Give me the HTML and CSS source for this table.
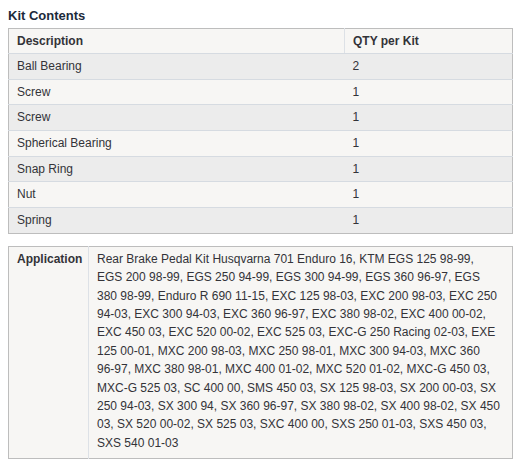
FILE: index.html
```html
<!DOCTYPE html>
<html>
<head>
<meta charset="utf-8">
<link rel="stylesheet" href="styles.css">
</head>
<body>
<h2 class="title">Kit Contents</h2>
<table class="kit">
  <thead>
    <tr><th class="desc">Description</th><th class="qty">QTY per Kit</th></tr>
  </thead>
  <tbody>
    <tr><td>Ball Bearing</td><td>2</td></tr>
    <tr><td>Screw</td><td>1</td></tr>
    <tr><td>Screw</td><td>1</td></tr>
    <tr><td>Spherical Bearing</td><td>1</td></tr>
    <tr><td>Snap Ring</td><td>1</td></tr>
    <tr><td>Nut</td><td>1</td></tr>
    <tr><td>Spring</td><td>1</td></tr>
  </tbody>
</table>
<table class="app">
  <colgroup><col class="app-col-label"><col class="app-col-text"></colgroup>
  <tr>
    <th class="app-label">Application</th>
    <td class="app-text">Rear Brake Pedal Kit Husqvarna 701 Enduro 16, KTM EGS 125 98-99, EGS 200 98-99, EGS 250 94-99, EGS 300 94-99, EGS 360 96-97, EGS 380 98-99, Enduro R 690 11-15, EXC 125 98-03, EXC 200 98-03, EXC 250 94-03, EXC 300 94-03, EXC 360 96-97, EXC 380 98-02, EXC 400 00-02, EXC 450 03, EXC 520 00-02, EXC 525 03, EXC-G 250 Racing 02-03, EXE 125 00-01, MXC 200 98-03, MXC 250 98-01, MXC 300 94-03, MXC 360 96-97, MXC 380 98-01, MXC 400 01-02, MXC 520 01-02, MXC-G 450 03, MXC-G 525 03, SC 400 00, SMS 450 03, SX 125 98-03, SX 200 00-03, SX 250 94-03, SX 300 94, SX 360 96-97, SX 380 98-02, SX 400 98-02, SX 450 03, SX 520 00-02, SX 525 03, SXC 400 00, SXS 250 01-03, SXS 450 03, SXS 540 01-03</td>
  </tr>
</table>
</body>
</html>
```
FILE: styles.css
```css
html, body {
  background: #ffffff;
}
body {
  margin: 8px;
  font-family: "Liberation Sans", Arial, sans-serif;
  font-size: 12px;
  color: #333338;
}
.title {
  margin: 0 0 5px 0;
  font-size: 13px;
  line-height: 15px;
  font-weight: bold;
  color: #1c2a3b;
}
.kit {
  width: 505px;
  border-collapse: collapse;
  border: 1px solid #bdbdbd;
  table-layout: fixed;
}
.kit th, .kit td {
  text-align: left;
  padding: 5px 8px;
  line-height: 14.67px;
}
.kit th {
  font-weight: bold;
  background: #f7f6f4;
  line-height: 14px;
  border-bottom: 1px solid #d6dbe1;
}
.kit th.desc {
  width: 319px;
  border-right: 1px solid #dde1e6;
}
.kit tbody tr {
  border-top: 1px solid #d6dbe1;
}
.kit tbody tr:nth-child(odd) td {
  background: #ececec;
}
.kit tbody tr:nth-child(even) td {
  background: #f7f6f4;
}
.app {
  margin-top: 12px;
  width: 505px;
  border-collapse: collapse;
  border: 1px solid #bdbdbd;
  background: #f7f6f4;
  table-layout: fixed;
}
.app-col-label {
  width: 80px;
}
.app th, .app td {
  vertical-align: top;
  text-align: left;
  line-height: 18.4px;
}
.app-label {
  padding: 3px 8px 6px 8px;
  font-weight: bold;
  border-right: 1px solid #dde1e6;
}
.app-text {
  padding: 3px 12px 6px 8px;
}
```
